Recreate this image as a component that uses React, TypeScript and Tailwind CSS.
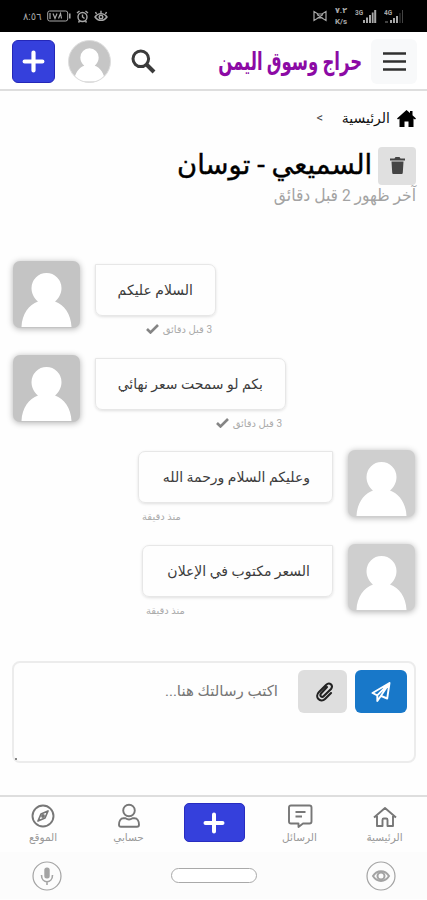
import type { ReactNode } from 'react'
import clsx from 'clsx'

interface Message {
  id: number
  text: string
  time: string
  mine: boolean
  bubble: string
}

const messages: Message[] = [
  { id: 1, text: 'السلام عليكم', time: '3 قبل دقائق', mine: false, bubble: 'w-[121px]' },
  { id: 2, text: 'بكم لو سمحت سعر نهائي', time: '3 قبل دقائق', mine: false, bubble: 'w-[191px]' },
  { id: 3, text: 'وعليكم السلام ورحمة الله', time: 'منذ دقيقة', mine: true, bubble: 'w-[195px]' },
  { id: 4, text: 'السعر مكتوب في الإعلان', time: 'منذ دقيقة', mine: true, bubble: 'w-[191px]' },
]

function PersonShape({ className }: { className?: string }) {
  return (
    <svg viewBox="0 0 67 67" className={className}>
      <path
        fill="#fff"
        d="M33.5 12a15 15 0 0 1 15 15c0 5.500-2.500 10-6.500 13.500C51 43.500 58 53 58.500 66H8.500C9 53 16 43.500 25 40.500 21 37 18.500 32.500 18.500 27a15 15 0 0 1 15-15z"
      />
    </svg>
  )
}

function Avatar({ mine }: { mine: boolean }) {
  return (
    <div
      className={clsx(
        'h-[67px] w-[67px] shrink-0 overflow-hidden rounded-[7px] shadow-[0_1px_6px_rgba(0,0,0,0.3)]',
        mine ? 'bg-[#cfcfcf]' : 'bg-[#c4c4c4]',
      )}
    >
      <PersonShape className="h-full w-full" />
    </div>
  )
}

function Plus({ className }: { className?: string }) {
  return (
    <svg viewBox="0 0 22 22" className={className} stroke="#fff" strokeWidth="4" strokeLinecap="round">
      <path d="M11 2.500v17M2.500 11h17" />
    </svg>
  )
}

function StatusBar() {
  return (
    <div className="flex h-[32px] items-center justify-between bg-black pl-[23px] pr-[23px] text-[#a8a8a8]">
      <div className="flex items-center gap-[5px]">
        <span className="w-[19px] whitespace-nowrap text-[10px]">٨:٥٦</span>
        <svg width="24" height="12" viewBox="0 0 24 12" fill="none" stroke="currentColor">
          <rect x="0.700" y="1" width="20" height="10" rx="2" />
          <path d="M22.800 3.500v5" strokeWidth="1.500" />
          <path d="M6 3.500l2 5 2-5M11.500 8.500l2-5 1 5M3 3v6" strokeWidth="1.200" />
        </svg>
        <svg width="13" height="13" viewBox="0 0 13 13" fill="none" stroke="currentColor" strokeWidth="1.400">
          <circle cx="6.500" cy="7" r="4.500" />
          <path d="M1 3l2.500-2M12 3L9.500 1M6.500 4.500V7l2 1.500M3.500 11l-1 1.500M9.500 11l1 1.500" />
        </svg>
        <svg width="14" height="13" viewBox="0 0 14 13" fill="none" stroke="currentColor" strokeWidth="1.400">
          <path d="M1 7c3-4.500 9-4.500 12 0-3 4.500-9 4.500-12 0zM2.500 4L1.500 2M7 3V.8M11.500 4l1-2" />
          <circle cx="7" cy="7" r="1.800" />
        </svg>
      </div>
      <div className="flex items-center gap-[7px]">
        <svg width="14" height="12" viewBox="0 0 14 12" fill="none" stroke="currentColor" strokeWidth="1.200">
          <path d="M1 1.500v9l4-2.500h4l4 2.500v-9L9 4H5zM4 4.500l6 4M10 4.500l-6 4" />
        </svg>
        <span className="flex w-[14px] flex-col items-center text-[8px] font-bold leading-[11px]">
          <span>٧.٢</span>
          <span>K/s</span>
        </span>
        <svg width="22" height="15" viewBox="0 0 22 15" fill="currentColor">
          <text x="0" y="5.500" fontSize="6.500" fontWeight="700">3G</text>
          <path d="M8 11h2v3H8zM11 8.500h2V14h-2zM14 6h2v8h-2zM16.800 3.500h1.800V14h-1.800zM19.200 1h2v13h-2z" />
        </svg>
        <svg width="20" height="15" viewBox="0 0 20 15" fill="currentColor">
          <text x="0" y="5.500" fontSize="6.500" fontWeight="700">4G</text>
          <path d="M6 11h2v3H6zM9 9h2v5H9zM12 7h2v7h-2z" />
          <path opacity="0.400" d="M1 12h3v2H1zM15.500 4h1v10h-1zM18 1h1v13h-1z" />
        </svg>
      </div>
    </div>
  )
}

function Header() {
  return (
    <header className="flex h-[59px] items-center border-b-2 border-[#dedede] bg-white pl-[12px] pr-[10px] pt-[2px]">
      <button className="flex h-[43px] w-[43px] items-center justify-center rounded-[6px] border border-[#2427b8] bg-[#3540dc]">
        <Plus className="h-[23px] w-[23px]" />
      </button>
      <div className="ml-[13px] h-[43px] w-[43px] overflow-hidden rounded-full border border-[#dddddd] bg-[#c6c6c6]">
        <PersonShape className="h-full w-full" />
      </div>
      <svg className="ml-[20px] h-[25px] w-[25px]" viewBox="0 0 25 25" fill="none" stroke="#3b3b3b">
        <circle cx="9.800" cy="9.800" r="7.800" strokeWidth="3" />
        <path d="M15.500 15.500l7.500 7.500" strokeWidth="4" />
      </svg>
      <div className="ml-auto mr-[9px] flex w-[144px] justify-end whitespace-nowrap">
        <span dir="rtl" className="origin-right scale-x-[0.66] text-[25px] font-bold leading-[34px] text-[#8c0aa5]">
          حراج وسوق اليمن
        </span>
      </div>
      <button className="flex h-[45px] w-[46px] items-center justify-center rounded-[6px] bg-[#f8f9fa]">
        <svg width="23" height="21" viewBox="0 0 23 21" stroke="#303030" strokeWidth="2.600">
          <path d="M0 2.500h23M0 10.500h23M0 18.500h23" />
        </svg>
      </button>
    </header>
  )
}

function ThreadTitle() {
  return (
    <div dir="rtl" className="h-[170px] px-[11px] pt-[15px]">
      <div className="flex h-[24px] items-center">
        <svg width="19" height="17" viewBox="0 0 19 17" fill="#000">
          <path d="M9.500 0l3.500 3V1h2.500v4.200L19 8.500l-1 1-1.500-1V17h-5v-5.500h-4V17h-5V8.500L1 9.500l-1-1z" />
        </svg>
        <span className="mr-[7px] w-[50px] whitespace-nowrap text-[14px] text-[#111]">الرئيسية</span>
        <span className="mr-[17px] text-[13px] text-[#444]" dir="ltr">&lt;</span>
      </div>
      <div className="mt-[16px] flex h-[39px] items-center">
        <button className="flex h-[38px] w-[38px] items-center justify-center rounded-[4px] bg-[#e0e0e0]">
          <svg width="15" height="17" viewBox="0 0 15 17" fill="#444">
            <path d="M0 1.500h4.500L5.500 0h4l1 1.500H15v2H0zM1.500 4.500h12l-.7 11c0 1-.6 1.500-1.500 1.500H3.700c-.9 0-1.500-.5-1.500-1.500z" />
          </svg>
        </button>
        <h1 className="mr-[6px] origin-right scale-x-[1.015] whitespace-nowrap text-[27px] text-black [-webkit-text-stroke:0.4px_black]">
          السميعي - توسان
        </h1>
      </div>
      <p className="origin-right scale-x-[0.915] whitespace-nowrap text-[17px] leading-[20px] text-[#a3a3a3]">
        آخر ظهور 2 قبل دقائق
      </p>
    </div>
  )
}

function MessageRow({ message }: { message: Message }) {
  const { mine } = message
  return (
    <div className={clsx('flex h-[94px]', mine ? 'justify-end pr-[12px] pt-px' : 'pl-[13px]')}>
      {!mine && <Avatar mine={mine} />}
      <div className={clsx('shrink-0', mine ? 'mr-[15px] pt-px' : 'ml-[15px] pt-[3px]', message.bubble)}>
        <div
          dir="rtl"
          className={clsx(
            'flex h-[52px] items-center whitespace-nowrap rounded-[7px] border border-[#e7e7e7] px-[22px] text-[14px] text-[#3c3c3c] shadow-[0_1px_3px_rgba(0,0,0,0.12)]',
            mine ? 'rounded-tr-none' : 'rounded-tl-none',
          )}
        >
          {message.text}
        </div>
        <div
          dir="rtl"
          className={clsx(
            'flex h-[26px] items-center gap-[4px] whitespace-nowrap text-[10px] text-[#aaa]',
            mine ? 'justify-end pl-[4px]' : 'pr-[4px]',
          )}
        >
          {message.time}
          {!mine && (
            <svg width="13" height="10" viewBox="0 0 13 10" fill="none" stroke="#858585" strokeWidth="2.600">
              <path d="M1 5l3.500 3.500L12 1" />
            </svg>
          )}
        </div>
      </div>
      {mine && <Avatar mine={mine} />}
    </div>
  )
}

function Composer() {
  return (
    <div dir="rtl" className="relative ml-[12px] mr-[11px] mt-[24px] flex h-[102px] rounded-[8px] border-2 border-[#ececec] pr-[7px] pt-[7px]">
      <button className="flex h-[43px] w-[52px] items-center justify-center rounded-[6px] bg-[#1878c9]">
        <svg width="20" height="20" viewBox="0 0 20 20" fill="none" stroke="#fff" strokeWidth="1.900" strokeLinejoin="round">
          <path d="M18.500 1L1.500 11l4.800 2.300L18.500 1l-2.300 15.500-6-2.500M6.300 13.300V19l3.500-5L18.500 1" />
        </svg>
      </button>
      <button className="mr-[8px] flex h-[43px] w-[49px] items-center justify-center rounded-[6px] bg-[#dedede]">
        <svg width="18" height="20" viewBox="0 0 18 20" className="mr-[-5px]" fill="none" stroke="#222" strokeWidth="2.100" strokeLinecap="round">
          <path d="M11 5L5 11.500c-2 2.500 1 4.500 2.800 2.500L15 7c3-3.500-1.500-7.500-5-4L3 10c-5 5 1.500 11.500 6 7l6-6" />
        </svg>
      </button>
      <span className="mr-[20px] mt-[10px] whitespace-nowrap text-[15px] text-[#777]">اكتب رسالتك هنا...</span>
      <span className="absolute bottom-[1px] left-[1px] h-[2px] w-[2px] bg-[#888]" />
    </div>
  )
}

function Tab({ label, width, children }: { label: string; width: string; children: ReactNode }) {
  return (
    <div className={clsx('flex flex-col items-center pt-[6px] text-[#777]', width)}>
      <svg width="26" height="26" viewBox="0 0 26 26" fill="none" stroke="currentColor" strokeWidth="1.900" strokeLinejoin="round">
        {children}
      </svg>
      <span dir="rtl" className="mt-[1px] whitespace-nowrap text-[10.5px] leading-[16px] text-[#999]">{label}</span>
    </div>
  )
}

function TabBar() {
  return (
    <nav className="mt-[32px] flex h-[57px] border-t-2 border-[#dedede]">
      <Tab label="الموقع" width="w-[86px]">
        <circle cx="13" cy="13" r="10.500" />
        <path d="M18 8l-3 7-7 3 3-7z" strokeWidth="1.700" />
        <circle cx="13" cy="13" r="1" />
      </Tab>
      <Tab label="حسابي" width="w-[85px]">
        <circle cx="13" cy="7.500" r="5.800" />
        <path d="M7.500 15.300h2c2 1.400 5 1.400 7 0h2c3 0 4.500 3.200 4.500 6.500 0 1.300-.7 2-2 2H5c-1.300 0-2-.7-2-2 0-3.300 1.500-6.500 4.500-6.500z" />
      </Tab>
      <div className="flex w-[86px] justify-center pt-[6px]">
        <button className="flex h-[39px] w-[61px] items-center justify-center rounded-[5px] border border-[#282cc0] bg-[#3540dc]">
          <Plus className="h-[22px] w-[22px]" />
        </button>
      </div>
      <Tab label="الرسائل" width="w-[85px]">
        <path d="M4 2.500h18.500c1.300 0 2 .7 2 2v14c0 1.300-.7 2-2 2H16l-4.500 3.500v-3.500H4c-1.300 0-2-.7-2-2v-14c0-1.300.7-2 2-2z" />
        <path d="M8.500 9h10M8.500 13.500h6.500" />
      </Tab>
      <Tab label="الرئيسية" width="w-[85px]">
        <path d="M2 14.500L13 5l11 9.500M5 13v10h5.500v-6c0-1 .5-1.500 1.300-1.500h2.400c.8 0 1.300.5 1.300 1.500v6H21V13" />
      </Tab>
    </nav>
  )
}

function SystemNav() {
  return (
    <div className="flex h-[47px] items-center bg-[#fcfcfc] pl-[32px] pr-[31px] text-[#a3a3a3]">
      <svg width="30" height="30" viewBox="0 0 30 30" fill="none" stroke="currentColor">
        <circle cx="15" cy="15" r="14" strokeWidth="1.200" />
        <rect x="12.300" y="6.500" width="5.400" height="11" rx="2.500" fill="currentColor" stroke="none" />
        <path d="M9.500 14c0 9 11 9 11 0M15 21v3" strokeWidth="1.600" />
      </svg>
      <div className="ml-[109px] h-[15px] w-[86px] rounded-full border-[1.500px] border-[#a9a9a9] bg-white" />
      <svg className="ml-auto" width="30" height="30" viewBox="0 0 30 30" fill="none" stroke="currentColor">
        <circle cx="15" cy="15" r="14" strokeWidth="1.200" />
        <path d="M7 15c4-6.500 12-6.500 16 0-4 6.500-12 6.500-16 0z" strokeWidth="2" />
        <circle cx="15" cy="15" r="3.500" strokeWidth="2" />
      </svg>
    </div>
  )
}

export default function App() {
  return (
    <div className="h-[900px] w-[427px] overflow-hidden bg-[#fefefe] font-['Roboto','DejaVu_Sans',sans-serif]">
      <StatusBar />
      <Header />
      <ThreadTitle />
      <main>
        {messages.map((message) => (
          <MessageRow key={message.id} message={message} />
        ))}
      </main>
      <Composer />
      <TabBar />
      <SystemNav />
    </div>
  )
}
